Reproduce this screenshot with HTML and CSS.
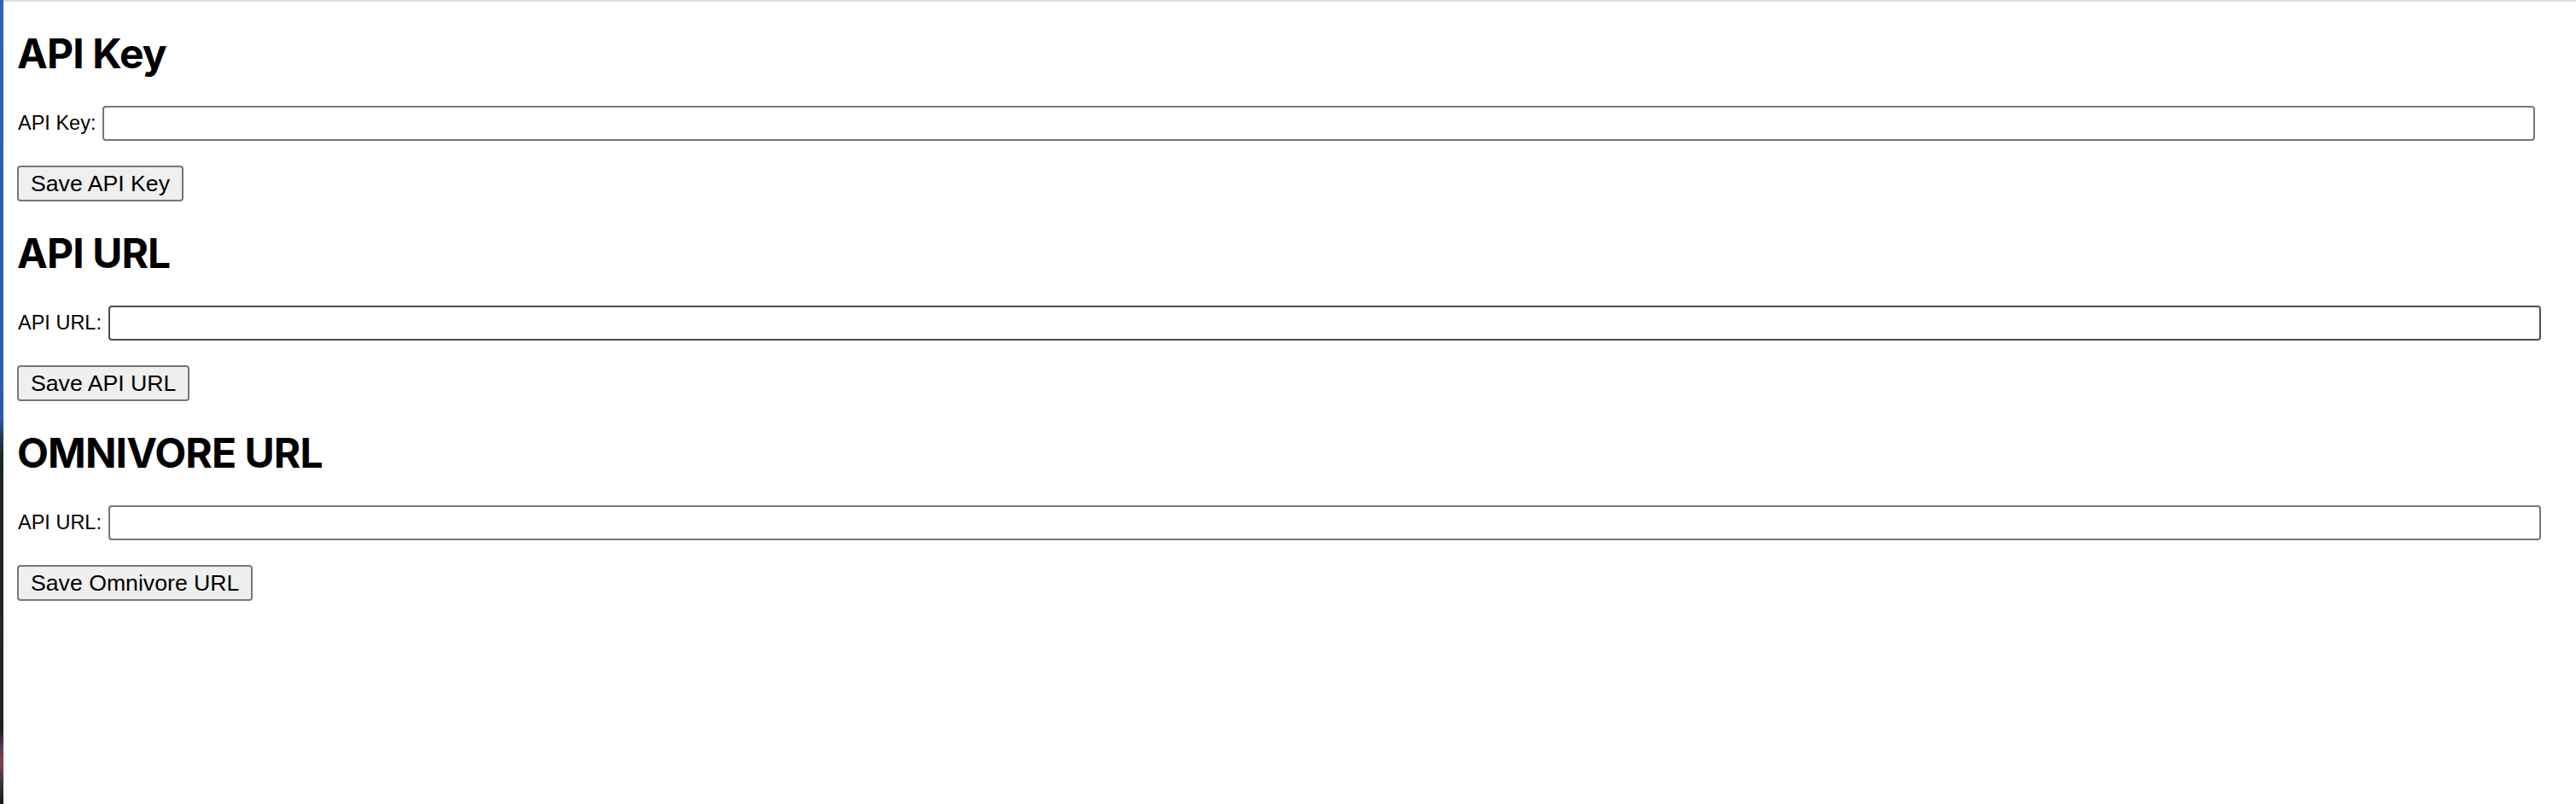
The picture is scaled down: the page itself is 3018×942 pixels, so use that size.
FILE: index.html
```html
<!DOCTYPE html>
<html lang="en">
<head>
<meta charset="utf-8">
<title>Options</title>
<link rel="stylesheet" href="styles.css">
</head>
<body>
<div class="screen">
  <div class="wallpaper"></div>
  <main class="content">
    <section class="section">
      <h2 class="title">API Key</h2>
      <div class="field">
        <label class="label" for="apiKey">API Key:</label>
        <input class="input" id="apiKey" type="text">
      </div>
      <button class="btn" type="button">Save API Key</button>
    </section>
    <section class="section">
      <h2 class="title">API URL</h2>
      <div class="field">
        <label class="label" for="apiUrl">API URL:</label>
        <input class="input input-hover" id="apiUrl" type="text">
      </div>
      <button class="btn" type="button">Save API URL</button>
    </section>
    <section class="section">
      <h2 class="title">OMNIVORE URL</h2>
      <div class="field">
        <label class="label" for="omnivoreUrl">API URL:</label>
        <input class="input" id="omnivoreUrl" type="text">
      </div>
      <button class="btn" type="button">Save Omnivore URL</button>
    </section>
  </main>
</div>
</body>
</html>
```

FILE: styles.css
```css
html, body {
  margin: 0;
  padding: 0;
  background: #ffffff;
}

.screen {
  display: flex;
  width: 3018px;
  height: 942px;
  overflow: hidden;
}

.wallpaper {
  flex: 0 0 4px;
  background: linear-gradient(to bottom,
    #2f63b3 0%,
    #2b5ba8 52%,
    #22405f 54%,
    #1a2524 57%,
    #212a22 80%,
    #1b2420 91%,
    #5b3a5c 93%,
    #8a4242 95%,
    #3a3a3a 97%,
    #1a1a1a 100%);
}

.content {
  flex: 1 1 auto;
  border-top: 2px solid #dedede;
  padding: 0 16px;
  display: flex;
  flex-direction: column;
  align-items: flex-start;
}

.section {
  display: flex;
  flex-direction: column;
  align-items: flex-start;
}

.title {
  margin: 33px 0;
  font-family: Inter, "Liberation Sans", sans-serif;
  font-weight: 700;
  font-size: 48px;
  line-height: 56px;
  letter-spacing: -0.9px;
  color: #000;
}

.field {
  display: flex;
  align-items: center;
  gap: 8px;
  height: 41px;
}

.label {
  font-family: "Liberation Sans", Arial, sans-serif;
  font-size: 23.5px;
  color: #000;
  margin-left: 1px;
}

.input {
  box-sizing: border-box;
  width: 2850px;
  height: 41px;
  border: 2px solid #767676;
  border-radius: 4px;
  background: #fff;
  padding: 2px 4px;
  margin: 0;
}

.input-hover {
  border-color: #4f4f4f;
}

.btn {
  margin: 29px 0 0 0;
  box-sizing: border-box;
  height: 42px;
  padding: 0 14px;
  border: 2px solid #767676;
  border-radius: 4px;
  background: #efefef;
  font-family: "Liberation Sans", Arial, sans-serif;
  font-size: 26.67px;
  line-height: 38px;
  color: #000;
}
```
